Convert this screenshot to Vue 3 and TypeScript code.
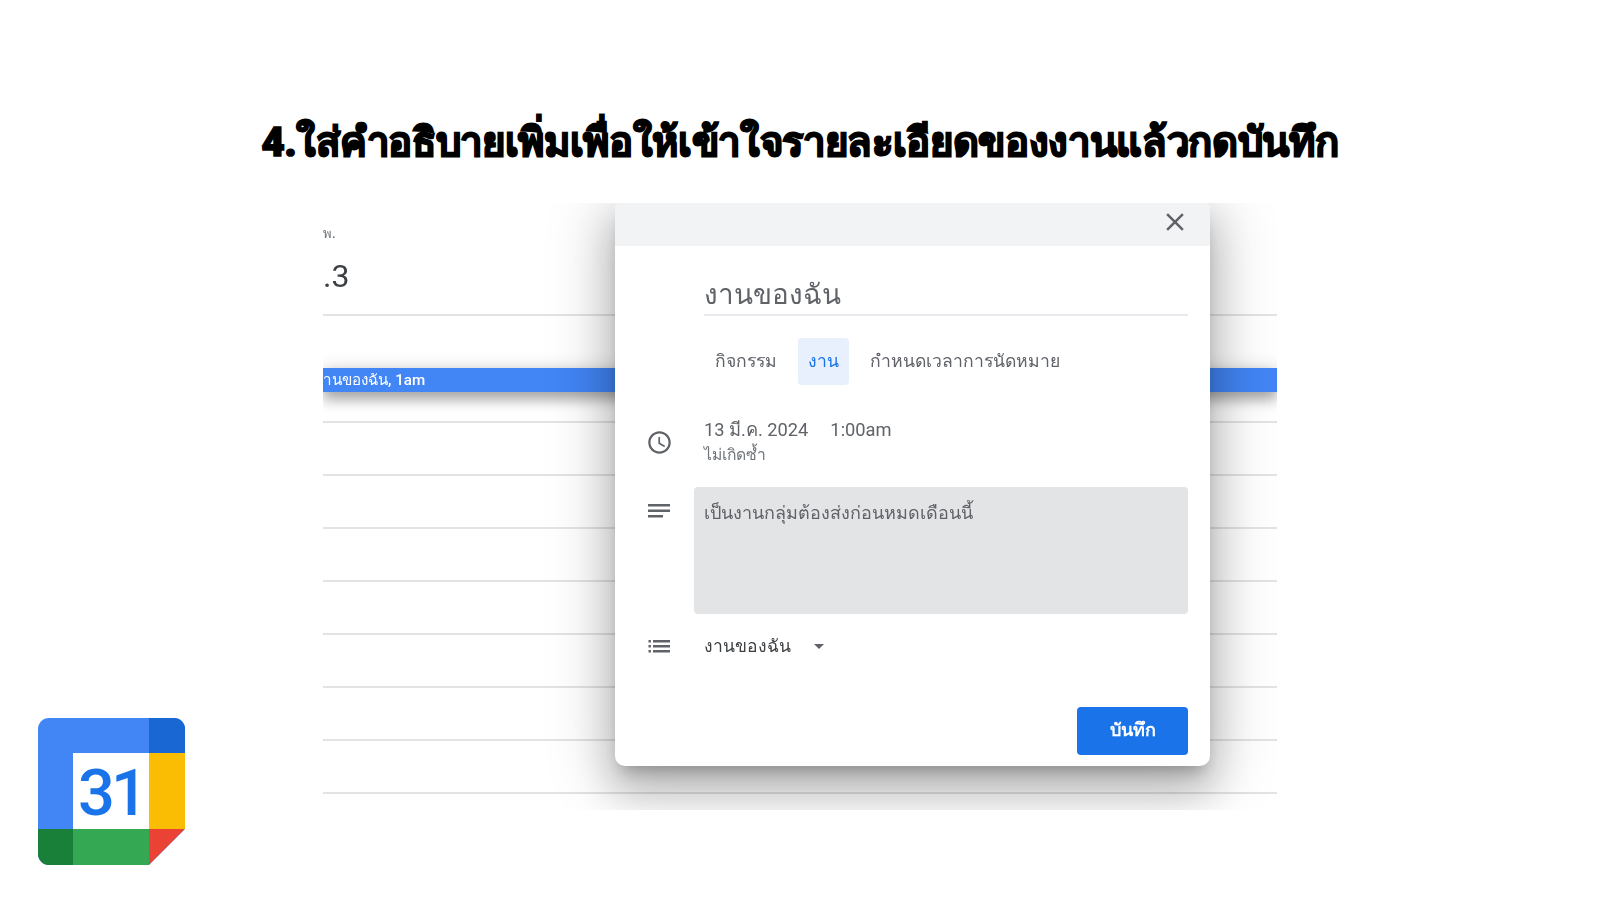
<template>
  <main class="slide">
    <h1 class="headline">4.ใส่คำอธิบายเพิ่มเพื่อให้เข้าใจรายละเอียดของงานแล้วกดบันทึก</h1>

    <section class="shot">
      <div class="day-head">
        <span class="weekday">พ.</span>
        <span class="daynum">.3</span>
      </div>
      <div class="grid-line"></div>
      <div class="allday">
        <div class="event"><span>านของฉัน, 1am</span></div>
      </div>
      <div v-for="n in hourLines" :key="n" class="grid-line hour"></div>

      <div class="dialog">
        <header class="dialog-top">
          <svg class="close" width="30" height="30" viewBox="0 0 24 24" fill="#5f6368">
            <path d="M19 6.41 17.59 5 12 10.59 6.41 5 5 6.41 10.59 12 5 17.59 6.41 19 12 13.41 17.59 19 19 17.59 13.41 12z" />
          </svg>
        </header>

        <div class="dialog-body">
          <div class="title-field">งานของฉัน</div>

          <div class="tabs">
            <span v-for="t in tabs" :key="t" class="tab" :class="{ active: t === 'งาน' }">{{ t }}</span>
          </div>

          <div class="row when">
            <svg class="icon clock" width="27" height="27" viewBox="0 0 24 24" fill="#5f6368">
              <path d="M11.99 2C6.47 2 2 6.48 2 12s4.47 10 9.99 10C17.52 22 22 17.52 22 12S17.52 2 11.99 2zM12 20c-4.42 0-8-3.58-8-8s3.58-8 8-8 8 3.58 8 8-3.58 8-8 8zm.5-13H11v6l5.25 3.15.75-1.23-4.5-2.67z" />
            </svg>
            <div class="when-text">
              <div class="when-main"><span>13 มี.ค. 2024</span><span>1:00am</span></div>
              <div class="when-sub">ไม่เกิดซ้ำ</div>
            </div>
          </div>

          <div class="row notes">
            <svg class="icon" width="24" height="24" viewBox="0 0 24 24" fill="#5f6368">
              <path d="M1 5h22v2.4H1zM1 10.5h22v2.4H1zM1 16h15v2.4H1z" />
            </svg>
            <div class="notes-box">เป็นงานกลุ่มต้องส่งก่อนหมดเดือนนี้</div>
          </div>

          <div class="row list">
            <svg class="icon" width="24" height="24" viewBox="0 0 24 24" fill="#5f6368">
              <path d="M1.5 6h2.4v2.4H1.5zM1.5 11h2.4v2.4H1.5zM1.5 16h2.4v2.4H1.5zM6 6h17v2.4H6zM6 11h17v2.4H6zM6 16h17v2.4H6z" />
            </svg>
            <div class="list-name">งานของฉัน</div>
            <span class="caret"></span>
          </div>

          <div class="actions">
            <button class="save" type="button">บันทึก</button>
          </div>
        </div>
      </div>
    </section>

    <svg class="cal-logo" width="147" height="147" viewBox="0 0 147 147">
      <defs>
        <clipPath id="logo-shape">
          <path d="M11 0H136a11 11 0 0 1 11 11V111L111 147H11A11 11 0 0 1 0 136V11A11 11 0 0 1 11 0z" />
        </clipPath>
      </defs>
      <g clip-path="url(#logo-shape)">
        <rect width="147" height="147" fill="#4285f4" />
        <rect x="111" width="36" height="35" fill="#1967d2" />
        <rect x="111" y="35" width="36" height="76" fill="#fbbc04" />
        <rect x="35" y="111" width="76" height="36" fill="#34a853" />
        <rect y="111" width="35" height="36" fill="#188038" />
        <path d="M111 111h36l-36 36z" fill="#ea4335" />
        <rect x="35" y="35" width="76" height="76" fill="#fff" />
      </g>
      <text x="73" y="97" class="logo-num">31</text>
    </svg>
  </main>
</template>

<script setup lang="ts">
const tabs: string[] = ['กิจกรรม', 'งาน', 'กำหนดเวลาการนัดหมาย']
const hourLines: number[] = [1, 2, 3, 4, 5, 6, 7, 8]
</script>

<style>
html,
body {
  margin: 0;
  background: #fff;
}
</style>

<style scoped>
.slide {
  position: relative;
  width: 1600px;
  height: 900px;
  overflow: hidden;
  background: #fff;
  font-family: Roboto, "Noto Sans", "DejaVu Sans", sans-serif;
  color: #5f6368;
}

.headline {
  margin: 0;
  padding-top: 112px;
  height: 91px;
  line-height: 62px;
  text-align: center;
  font-size: 40px;
  font-weight: 900;
  letter-spacing: -0.33px;
  color: #000;
  -webkit-text-stroke: 1.7px #000;
  white-space: nowrap;
}

.shot {
  position: relative;
  width: 954px;
  height: 607px;
  margin-left: 323px;
  overflow: hidden;
  background: #fff;
  filter: blur(0.4px);
}

.day-head {
  height: 111px;
  display: flex;
  flex-direction: column;
}

.weekday {
  margin-top: 21px;
  height: 20px;
  font-size: 13px;
  line-height: 20px;
  font-weight: 500;
  color: #70757a;
}

.daynum {
  height: 48px;
  margin-top: 8px;
  font-size: 32px;
  line-height: 48px;
  color: #3c4043;
}

.grid-line {
  height: 2px;
  background: #e3e3e3;
}

.grid-line.hour {
  margin-top: 51px;
}

.allday {
  box-sizing: border-box;
  height: 105px;
  padding-top: 52px;
  margin-bottom: -51px;
}

.event {
  height: 24px;
  background: #4285f4;
  box-shadow: 0 8px 14px rgba(0, 0, 0, 0.3), 0 0 18px rgba(0, 0, 0, 0.14);
  overflow: hidden;
}

.event span {
  display: block;
  font-size: 15.2px;
  line-height: 24px;
  font-weight: 500;
  color: #fff;
  white-space: nowrap;
}

.dialog {
  position: absolute;
  left: 292px;
  top: 0;
  width: 595px;
  height: 563px;
  background: #fff;
  border-radius: 6px 6px 10px 10px;
  box-shadow: 0 24px 38px 3px rgba(0, 0, 0, 0.18), 0 9px 60px 12px rgba(0, 0, 0, 0.17), 0 11px 15px -7px rgba(0, 0, 0, 0.24);
  display: flex;
  flex-direction: column;
}

.dialog-top {
  height: 43px;
  background: #f1f3f4;
  border-radius: 6px 6px 0 0;
  display: flex;
  justify-content: flex-end;
  padding: 4px 20px 0 0;
  box-sizing: border-box;
}

.dialog-body {
  flex: 1;
  display: flex;
  flex-direction: column;
  padding: 0 22px 11px 32px;
  min-height: 0;
}

.title-field {
  margin: 22px 0 0 57px;
  padding-top: 4px;
  height: 42px;
  border-bottom: 2px solid #e8eaed;
  font-size: 27.8px;
  line-height: 45px;
  color: #5f6368;
}

.tabs {
  display: flex;
  gap: 11px;
  margin: 22px 0 0 58px;
  height: 47px;
}

.tab {
  padding: 0 10px;
  line-height: 47px;
  font-size: 17.6px;
  border-radius: 4px;
  color: #5f6368;
}

.tab.active {
  background: #e8f0fe;
  color: #1a73e8;
}

.row {
  display: flex;
}

.icon {
  flex: none;
}

.when {
  margin-top: 30px;
  height: 52px;
  align-items: center;
  gap: 33px;
}

.clock {
  margin: 2px -1.5px 0;
}

.when-main {
  display: flex;
  gap: 22px;
  font-size: 18.3px;
  line-height: 26px;
}

.when-sub {
  font-size: 15.7px;
  line-height: 23px;
  color: #70757a;
}

.notes {
  margin-top: 20px;
  height: 127px;
  gap: 23px;
}

.notes .icon {
  margin-top: 12px;
}

.notes-box {
  flex: 1;
  background: #e3e4e6;
  border-radius: 4px;
  padding: 12px 10px 8px;
  font-size: 18px;
  line-height: 28px;
}

.list {
  margin-top: 17px;
  height: 30px;
  align-items: center;
  gap: 33px;
}

.list-name {
  font-size: 17.5px;
  line-height: 30px;
  color: #3c4043;
}

.caret {
  margin-left: -10px;
  margin-top: 1px;
  width: 0;
  height: 0;
  border-left: 5px solid transparent;
  border-right: 5px solid transparent;
  border-top: 5px solid #5f6368;
}

.actions {
  margin-top: auto;
  display: flex;
  justify-content: flex-end;
}

.save {
  width: 111px;
  height: 48px;
  padding: 0 0 4px;
  border: 0;
  border-radius: 4px;
  background: #1a73e8;
  color: #fff;
  font: 700 18px Roboto, "Noto Sans", "DejaVu Sans", sans-serif;
}

.cal-logo {
  position: absolute;
  left: 38px;
  top: 718px;
}

.logo-num {
  font-family: Roboto, sans-serif;
  font-size: 65px;
  font-weight: 500;
  letter-spacing: -4px;
  fill: #1a73e8;
  text-anchor: middle;
}
</style>
